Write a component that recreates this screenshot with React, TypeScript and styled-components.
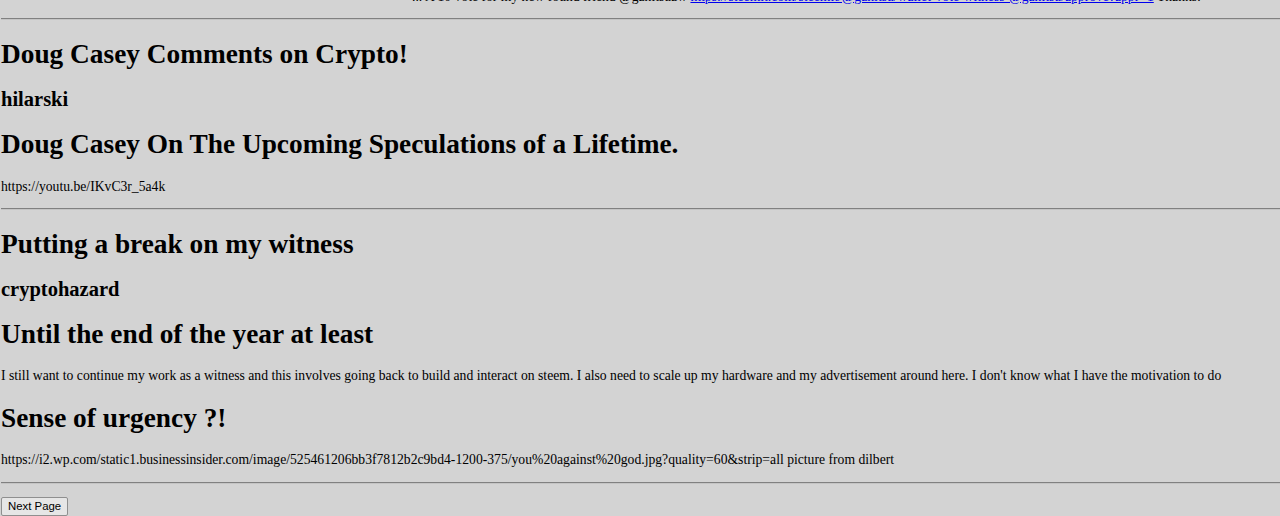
import React from "react";
import styled, { createGlobalStyle } from "styled-components";

const Global = createGlobalStyle`
  html, body { margin: 0; padding: 0; background: #d3d3d3; }
  body { font-family: "Liberation Serif", "Times New Roman", serif; font-size: 13.67px; color: #000; overflow: hidden; }
`;

const Page = styled.div`
  margin-top: -25px;
  padding: 0 0 0 1px;
`;

const Title = styled.h1`
  font-size: 2em;
  font-weight: bold;
  margin: 0.67em 0;
`;

const Author = styled.h2`
  font-size: 1.5em;
  font-weight: bold;
  margin: 0.83em 0;
`;

const Body = styled.p`
  margin: 1em 0;
`;

const TailLine = styled.p`
  margin: 1em 0;
  padding-left: 411px;
  white-space: nowrap;
  a { color: #0000ee; }
`;

const Rule = styled.hr`
  margin: 0.5em 0;
  border: none;
  border-top: 1px solid #808080;
  border-bottom: 1px solid #c4c4c4;
`;

const Pager = styled.form`
  margin: 1em 0;
`;

const NextButton = styled.button`
  font-family: "Liberation Sans", Arial, sans-serif;
  font-size: 11.4px;
  padding: 2px 6px 3px;
  background: #e6e6e6;
  border: 1px solid #8f8f8f;
  border-radius: 2px;
  color: #000;
`;

const posts = [
  {
    title: "Doug Casey Comments on Crypto!",
    author: "hilarski",
    sections: [
      { heading: "Doug Casey On The Upcoming Speculations of a Lifetime.", text: "https://youtu.be/IKvC3r_5a4k" },
    ],
  },
  {
    title: "Putting a break on my witness",
    author: "cryptohazard",
    sections: [
      {
        heading: "Until the end of the year at least",
        text: "I still want to continue my work as a witness and this involves going back to build and interact on steem. I also need to scale up my hardware and my advertisement around here. I don't know what I have the motivation to do",
      },
      {
        heading: "Sense of urgency ?!",
        text: "https://i2.wp.com/static1.businessinsider.com/image/525461206bb3f7812b2c9bd4-1200-375/you%20against%20god.jpg?quality=60&strip=all picture from dilbert",
      },
    ],
  },
];

export default function App() {
  return (
    <>
      <Global />
      <Page>
        <TailLine>
          ... A 10 vote for my new found friend @ganitsuaw{" "}
          <a href="#">https://steemit.com/steemit/@ganitsu/wallet-vote-witness-@ganitsu/approve?appr=1</a> Thanks.
        </TailLine>
        <Rule />
        {posts.map((p) => (
          <React.Fragment key={p.title}>
            <Title>{p.title}</Title>
            <Author>{p.author}</Author>
            {p.sections.map((s) => (
              <React.Fragment key={s.heading}>
                <Title>{s.heading}</Title>
                <Body>{s.text}</Body>
              </React.Fragment>
            ))}
            <Rule />
          </React.Fragment>
        ))}
        <Pager onSubmit={(e) => e.preventDefault()}>
          <NextButton type="submit">Next Page</NextButton>
        </Pager>
      </Page>
    </>
  );
}
